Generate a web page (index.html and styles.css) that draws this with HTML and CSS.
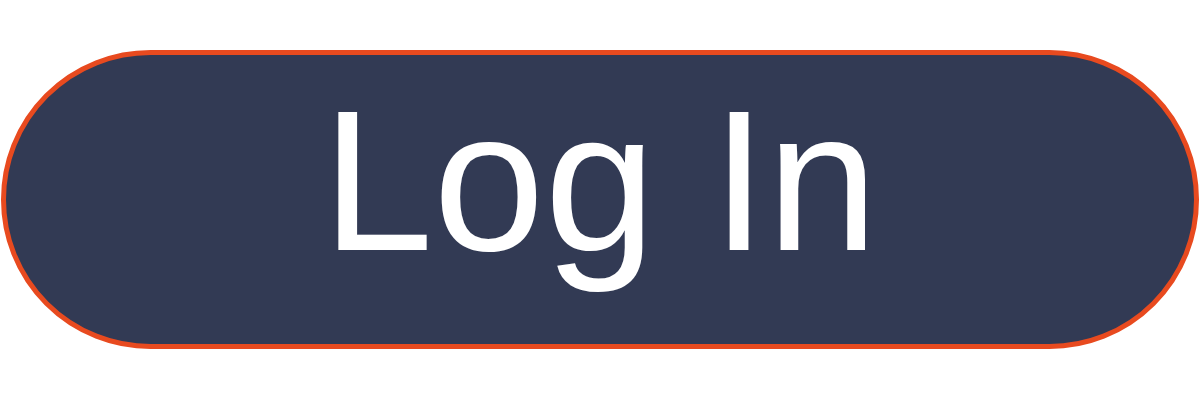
FILE: index.html
```html
<!DOCTYPE html>
<html>
<head>
<meta charset="utf-8">
<link rel="stylesheet" href="styles.css">
</head>
<body>
<div class="page">
  <button class="login-btn">Log In</button>
</div>
</body>
</html>
```
FILE: styles.css
```css
html, body {
  margin: 0;
  padding: 0;
  background: #ffffff;
}
.page {
  width: 1200px;
  height: 400px;
  display: flex;
  align-items: flex-start;
  justify-content: center;
  padding-top: 50px;
  box-sizing: border-box;
}
.login-btn {
  box-sizing: border-box;
  width: 1198px;
  height: 299px;
  border: 5px solid #e84a1f;
  border-radius: 150px;
  background: #323a54;
  color: #ffffff;
  font-family: "Liberation Sans", Arial, sans-serif;
  font-size: 200px;
  line-height: 1;
  padding: 0 0 38px 0;
  display: flex;
  align-items: center;
  justify-content: center;
}
```
